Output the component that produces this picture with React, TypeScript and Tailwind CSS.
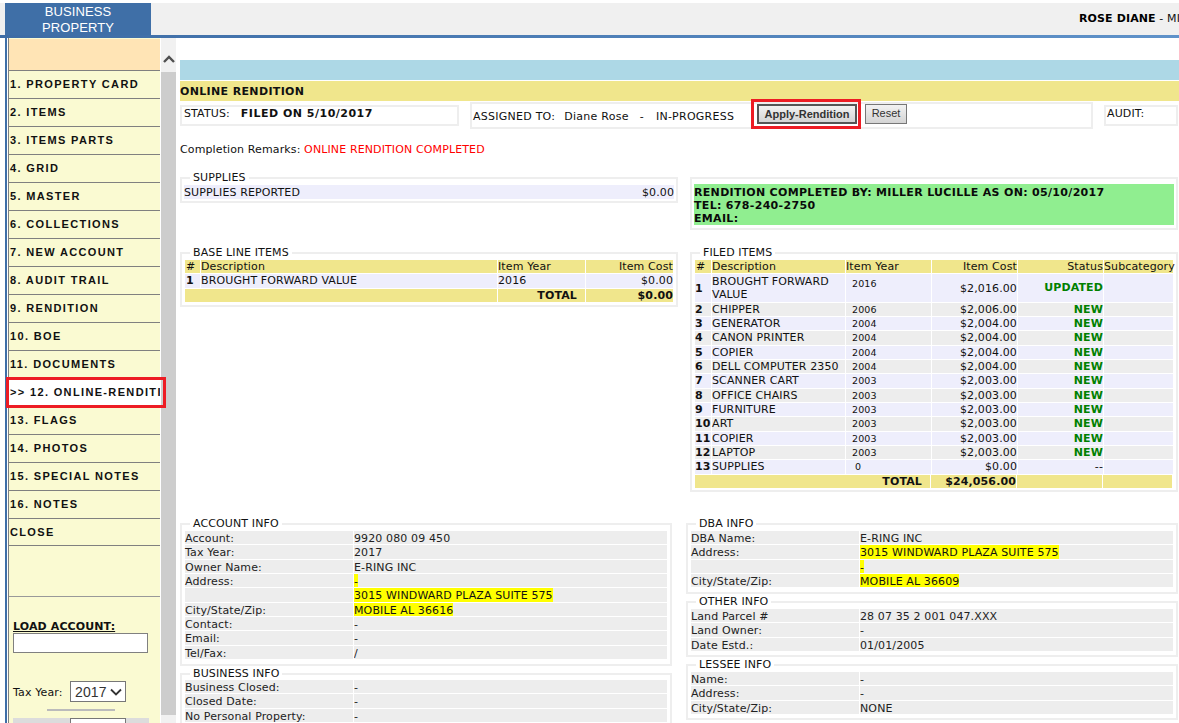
const ui = '[font-family:"DejaVu_Sans",Verdana,sans-serif]';
const arial = "[font-family:'Liberation_Sans',Arial,sans-serif]";
const menu = ["1. PROPERTY CARD","2. ITEMS","3. ITEMS PARTS","4. GRID","5. MASTER","6. COLLECTIONS","7. NEW ACCOUNT","8. AUDIT TRAIL","9. RENDITION","10. BOE","11. DOCUMENTS",">> 12. ONLINE-RENDITION","13. FLAGS","14. PHOTOS","15. SPECIAL NOTES","16. NOTES","CLOSE"];
const filed = [
 ["2","CHIPPER","2006","$2,006.00"],["3","GENERATOR","2004","$2,004.00"],["4","CANON PRINTER","2004","$2,004.00"],["5","COPIER","2004","$2,004.00"],["6","DELL COMPUTER 2350","2004","$2,004.00"],["7","SCANNER CART","2003","$2,003.00"],["8","OFFICE CHAIRS","2003","$2,003.00"],["9","FURNITURE","2003","$2,003.00"],["10","ART","2003","$2,003.00"],["11","COPIER","2003","$2,003.00"],["12","LAPTOP","2003","$2,003.00"],
];
function Box({ title, className, children }: { title: string; className: string; children?: React.ReactNode }) {
  return (
    <fieldset className={`border-2 border-[#eeeeee] ${className}`}>
      <legend className="ml-[8px] px-[3px] text-[11px] leading-[11px] text-[#111]">{title}</legend>
      {children}
    </fieldset>
  );
}
function Info({ rows, top = "mt-[2px]" }: { rows: [string, string, boolean?][]; top?: string }) {
  return (
    <div className={`mx-[3px] ${top} flex flex-col gap-px`}>
      {rows.map(([a, b, y], i) => (
        <div key={i} className="grid grid-cols-[168px_1fr] grid-rows-[13.33px] gap-px h-[13.33px] text-[11px] text-[#222] whitespace-nowrap">
          <div className="bg-[#ededed] h-[13.33px] pt-px leading-[13px]">{a}</div>
          <div className="bg-[#ededed] h-[13.33px] overflow-hidden leading-[13px]">{b ? <span className={y ? "block w-fit h-[13.33px] pt-px bg-[#ffff00] text-[#111]" : "block pt-px"}>{b}</span> : null}</div>
        </div>
      ))}
    </div>
  );
}
const filedCols = "grid-cols-[16px_133px_85px_85px_85px_69px]";
const baseCols = "grid-cols-[15px_296px_87px_87px]";
const row = "gap-px h-[13.33px] leading-[13.33px]";
export default function App() {
  return (
    <div className={`w-[1179px] h-[723px] overflow-hidden bg-white pt-[3px] text-[11px] tracking-[0.12px] text-[#111] relative ${ui}`}>
      <header className="flex h-[32px] bg-[#f0f0f0]">
        <div className={`ml-[5px] w-[146px] bg-[#3f6fa7] pt-px text-center text-white text-[13px] leading-[16px] tracking-[0.1px] ${arial}`}>BUSINESS<br />PROPERTY</div>
        <div className="flex-1 overflow-hidden whitespace-nowrap pl-[928px] pt-[9px] text-[11px] leading-[13px]"><b className="text-black">ROSE DIANE</b> - MILLER</div>
      </header>
      <div className="h-[3px] bg-gradient-to-r from-[#3d6ca5] to-[#5f92c9]" />
      <div className="flex h-[685px]">
        <div className="ml-[5px] w-[2px] bg-[#3f6fa7]" />
        <nav className="ml-px w-[152px] border-l border-[#808080] bg-[#fafad2] shrink-0 overflow-hidden">
          <div className="h-[32px] border-b border-[#808080] bg-[#ffe4b5] mt-px" />
          {menu.map((m) => (
            <div key={m} className={`${m === "CLOSE" ? "h-[27px]" : "h-[28px]"} border-b border-[#808080] pl-px leading-[27px] text-[11px] font-bold tracking-[1.35px] whitespace-nowrap overflow-hidden ${arial} ${m.startsWith(">>") ? "bg-white" : ""}`}>{m}</div>
          ))}
          <div className="h-[51px] border-b border-[#999]" />
          <div className="pl-[4px] pt-[23px]">
            <div className="font-bold underline text-[11px] leading-[13px]">LOAD ACCOUNT:</div>
            <div className="h-[20px] w-[135px] border border-[#808080] bg-white" />
            <div className="mt-[28px] flex items-center gap-[4px] h-[21px]">
              <span className="w-[53px] text-[11px] pt-[4px] whitespace-nowrap">Tax Year:</span>
              <div className="relative h-[21px] w-[56px]">
                <select defaultValue="2017" className={`h-[21px] w-[56px] appearance-none border border-[#777] bg-white pl-[4px] text-[14px] text-[#333] ${arial}`}><option>2017</option></select>
                <svg className="absolute right-[4px] top-[7px]" width="12" height="8" viewBox="0 0 12 8"><path d="M1 1.5 L6 6.5 L11 1.5" fill="none" stroke="#333" strokeWidth="1.8" /></svg>
              </div>
            </div>
            <div className="ml-[34px] mt-[7px] h-[2px] w-[68px] bg-[#bbb]" />
            <div className="mt-[7px] flex h-[20px] w-[136px] bg-[#dcdcdc]"><div className="ml-[57px] h-[20px] w-[56px] border border-[#777] bg-white" /></div>
          </div>
        </nav>
        <div className="ml-px flex w-[15px] shrink-0 flex-col bg-[#f1f1f1]">
          <div className="flex h-[34px] items-start justify-center pt-[17px]">
            <svg width="12" height="8" viewBox="0 0 12 8"><path d="M1 7 L6 2 L11 7" fill="none" stroke="#505050" strokeWidth="2.4" /></svg>
          </div>
          <div className="h-[643px] bg-[#cdcdcd]" />
        </div>
        <main className="ml-[4px] flex-1 min-w-0">
          <div className="mt-[22px] h-[20px] bg-[#add8e6]" />
          <div className="mt-px h-[20px] bg-[#f0e68c] pt-px text-[11px] font-bold tracking-[0.35px] leading-[20px]">ONLINE RENDITION</div>
          <div className="mt-px flex h-[26px] items-center">
            <div className="flex h-[21px] w-[279px] items-center border-2 border-[#eeeeee] pl-[2px] pb-px">STATUS:<b className="ml-[11px] tracking-[0.5px]">FILED ON 5/10/2017</b></div>
            <div className="ml-[11px] flex h-[27px] w-[623px] items-center border-2 border-[#eeeeee] pl-px">
              <span className="flex w-[284px] pt-[5px] tracking-[0.25px] whitespace-nowrap"><span>ASSIGNED TO:</span><span className="ml-[9px]">Diane Rose</span><span className="ml-[11px]">-</span><span className="ml-[12px]">IN-PROGRESS</span></span>
              <button className={`self-start h-[20px] w-[100px] border-2 border-[#555] bg-gradient-to-b from-[#f2f2f2] to-[#d4d4d4] text-[11px] font-bold tracking-normal text-[#333] ${arial}`}>Apply-Rendition</button>
              <button className={`self-start ml-[8px] h-[20px] w-[42px] border border-[#777] bg-gradient-to-b from-[#f2f2f2] to-[#d4d4d4] pb-[2px] text-[11px] tracking-normal text-[#333] ${arial}`}>Reset</button>
            </div>
            <div className="ml-[11px] flex h-[21px] w-[74px] items-center border-2 border-[#eeeeee] pl-px pb-px">AUDIT:</div>
          </div>
          <div className="mt-[15px] h-[14px] leading-[14px]">Completion Remarks: <span className="text-[#ff0000]">ONLINE RENDITION COMPLETED</span></div>
          <div className="mt-[15px] grid grid-cols-[498px_488px] gap-x-[12px]">
            <div>
              <Box title="SUPPLIES" className="h-[31px]">
                <div className="mx-[2px] mt-[2px] flex h-[14px] justify-between bg-[#eeeefc] pt-px leading-[14px]"><span>SUPPLIES REPORTED</span><span>$0.00</span></div>
              </Box>
              <Box title="BASE LINE ITEMS" className="mt-[44px] h-[60px]">
                <div className="mx-[3px] mt-[2px] flex flex-col gap-px">
                  <div className={`grid ${baseCols} ${row}`}>
                    <div className="bg-[#f0e68c] pl-[1px]">#</div><div className="bg-[#f0e68c]">Description</div><div className="bg-[#f0e68c]">Item Year</div><div className="bg-[#f0e68c] text-right">Item Cost</div>
                  </div>
                  <div className={`grid ${baseCols} ${row}`}>
                    <div className="bg-[#eeeefc] pl-px font-bold">1</div><div className="bg-[#eeeefc]">BROUGHT FORWARD VALUE</div><div className="bg-[#eeeefc]">2016</div><div className="bg-[#eeeefc] text-right">$0.00</div>
                  </div>
                  <div className={`grid grid-cols-[312px_87px_87px] ${row} font-bold`}>
                    <div className="bg-[#f0e68c]" /><div className="bg-[#f0e68c] pr-[8px] text-right">TOTAL</div><div className="bg-[#f0e68c] text-right">$0.00</div>
                  </div>
                </div>
              </Box>
            </div>
            <div>
              <div className="mt-[5px] h-[53px] border-2 border-[#eeeeee] px-[2px] pt-[5px]">
                <div className="h-[41px] bg-[#90ee90] pt-[2px] font-bold tracking-[0.32px] leading-[13px] text-[#0a0a0a]">RENDITION COMPLETED BY: MILLER LUCILLE AS ON: 05/10/2017<br />TEL: 678-240-2750<br />EMAIL:</div>
              </div>
              <Box title="FILED ITEMS" className="mt-[17px] h-[245px]">
                <div className="mx-[3px] mt-[2px] flex flex-col gap-px">
                  <div className={`grid ${filedCols} ${row}`}>
                    {["#","Description","Item Year","Item Cost","Status","Subcategory"].map((h, i) => <div key={h} className={`bg-[#f0e68c] whitespace-nowrap ${i === 0 ? "pl-px" : ""} ${i === 3 || i === 4 ? "text-right" : ""}`}>{h}</div>)}
                  </div>
                  <div className={`grid ${filedCols} gap-px h-[27.4px] leading-[13px]`}>
                    <div className="flex items-center bg-[#eeeefc] font-bold">1</div>
                    <div className="bg-[#eeeefc] pt-px">BROUGHT FORWARD VALUE</div>
                    <div className="bg-[#eeeefc] pl-[6px] pt-[3px] text-[9.5px]">2016</div>
                    <div className="flex items-center justify-end bg-[#eeeefc]">$2,016.00</div>
                    <div className="flex items-center justify-end bg-[#eeeefc] pb-[2px] font-bold text-[#008000]">UPDATED</div>
                    <div className="bg-[#eeeefc]" />
                  </div>
                  {filed.map((r, i) => {
                    const bg = i % 2 === 0 ? "bg-[#ededed]" : "bg-[#eeeefc]";
                    return (
                      <div key={r[0]} className={`grid ${filedCols} ${row}`}>
                        <div className={`${bg} font-bold`}>{r[0]}</div>
                        <div className={`${bg} whitespace-nowrap`}>{r[1]}</div>
                        <div className={`${bg} pl-[6px] text-[9.5px]`}>{r[2]}</div>
                        <div className={`${bg} text-right`}>{r[3]}</div>
                        <div className={`${bg} text-right font-bold text-[#008000]`}>NEW</div>
                        <div className={bg} />
                      </div>
                    );
                  })}
                  <div className={`grid ${filedCols} ${row}`}>
                    <div className="bg-[#eeeefc] font-bold">13</div><div className="bg-[#eeeefc]">SUPPLIES</div><div className="bg-[#eeeefc] pl-[9px] text-[9.5px]">0</div><div className="bg-[#eeeefc] text-right">$0.00</div><div className="bg-[#eeeefc] text-right">--</div><div className="bg-[#eeeefc]" />
                  </div>
                  <div className={`grid grid-cols-[235px_85px_85px_69px] ${row} font-bold`}>
                    <div className="bg-[#f0e68c] pr-[8px] text-right">TOTAL</div><div className="bg-[#f0e68c] text-right">$24,056.00</div><div className="bg-[#f0e68c]" /><div className="bg-[#f0e68c]" />
                  </div>
                </div>
              </Box>
            </div>
          </div>
          <div className="mt-[26px] flex">
            <div className="w-[492px]">
              <Box title="ACCOUNT INFO" className="h-[148px]">
                <Info rows={[["Account:","9920 080 09 450"],["Tax Year:","2017"],["Owner Name:","E-RING INC"],["Address:","-",true],["","3015 WINDWARD PLAZA SUITE 575",true],["City/State/Zip:","MOBILE AL 36616",true],["Contact:","-"],["Email:","-"],["Tel/Fax:","/"]]} />
              </Box>
              <Box title="BUSINESS INFO" className="mt-[2px] h-[70px]">
                <Info top="mt-px" rows={[["Business Closed:","-"],["Closed Date:","-"],["No Personal Property:","-"]]} />
              </Box>
            </div>
            <div className="ml-[14px] w-[492px]">
              <Box title="DBA INFO" className="h-[76px]">
                <Info rows={[["DBA Name:","E-RING INC"],["Address:","3015 WINDWARD PLAZA SUITE 575",true],["","-",true],["City/State/Zip:","MOBILE AL 36609",true]]} />
              </Box>
              <Box title="OTHER INFO" className="mt-[2px] h-[61px]">
                <Info rows={[["Land Parcel #","28 07 35 2 001 047.XXX"],["Land Owner:","-"],["Date Estd.:","01/01/2005"]]} />
              </Box>
              <Box title="LESSEE INFO" className="mt-[2px] h-[61px]">
                <Info rows={[["Name:","-"],["Address:","-"],["City/State/Zip:","NONE"]]} />
              </Box>
            </div>
          </div>
        </main>
      </div>
      <div className="absolute left-[6px] top-[377px] h-[31px] w-[160px] border-[3px] border-[#ed1c24]" />
      <div className="absolute left-[751px] top-[99px] h-[30px] w-[110px] border-[3px] border-[#ed1c24]" />
    </div>
  );
}
